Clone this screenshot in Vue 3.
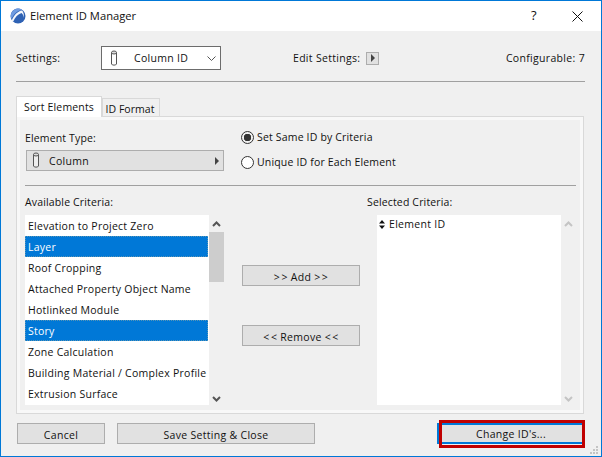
<script setup>
const available = [
  { label: 'Elevation to Project Zero' },
  { label: 'Layer', selected: true },
  { label: 'Roof Cropping' },
  { label: 'Attached Property Object Name' },
  { label: 'Hotlinked Module' },
  { label: 'Story', selected: true },
  { label: 'Zone Calculation' },
  { label: 'Building Material / Complex Profile' },
  { label: 'Extrusion Surface' },
]
</script>

<template>
  <div class="window">
    <header class="titlebar">
      <svg class="logo" width="16" height="16" viewBox="0 0 16 16">
        <circle cx="8" cy="8" r="7.5" fill="#2f62b4" />
        <path d="M1 6 C2 3 5 0.5 8 0.5 C10 0.5 11 1 12 2 C8 2.5 4 5 1.5 11 C0.8 9 0.6 8 1 6 Z" fill="#6f9be0" />
        <path d="M1.5 13 C4 7 8 3 12 2.6 C13.6 4 14 7 14 10 C13.6 8 13 6 11.5 5 C8 6 5 9 3 14 Z" fill="#f4f7fc" />
      </svg>
      <span class="title">Element ID Manager</span>
      <span class="help">?</span>
      <svg class="close" width="11" height="11" viewBox="0 0 11 11">
        <path d="M0.5 0.5 L10.5 10.5 M10.5 0.5 L0.5 10.5" stroke="#111" stroke-width="1" fill="none" />
      </svg>
    </header>

    <main class="body">
      <section class="settings">
        <span class="settings-label">Settings:</span>
        <div class="dropdown">
          <svg class="col-icon" width="8" height="17" viewBox="0 0 8 17">
            <path d="M1.5 2.5 L1.5 14 C1.5 15.5 6.5 15.5 6.5 14 L6.5 2.5" fill="#fff" stroke="#555" />
            <ellipse cx="4" cy="2.5" rx="2.5" ry="1.5" fill="#ddd" stroke="#555" />
          </svg>
          <span class="dropdown-text">Column ID</span>
          <svg width="9" height="5" viewBox="0 0 9 5">
            <path d="M0.5 0.5 L4.5 4.5 L8.5 0.5" stroke="#555" fill="none" />
          </svg>
        </div>
        <span class="edit">Edit Settings:</span>
        <span class="mini-btn"><i class="tri"></i></span>
        <span class="config">Configurable: 7</span>
      </section>

      <hr class="rule top-rule" />

      <nav class="tabs">
        <span class="tab active">Sort Elements</span>
        <span class="tab">ID Format</span>
      </nav>

      <section class="panel">
        <div class="type-row">
          <div class="type-col">
            <div class="label">Element Type:</div>
            <div class="type-btn">
              <svg class="col-icon" width="8" height="17" viewBox="0 0 8 17">
                <path d="M1.5 2.5 L1.5 14 C1.5 15.5 6.5 15.5 6.5 14 L6.5 2.5" fill="#eee" stroke="#555" />
                <ellipse cx="4" cy="2.5" rx="2.5" ry="1.5" fill="#ddd" stroke="#555" />
              </svg>
              <span class="type-text">Column</span>
              <i class="tri"></i>
            </div>
          </div>
          <div class="radios">
            <label class="radio"><span class="dot on"></span>Set Same ID by Criteria</label>
            <label class="radio"><span class="dot"></span>Unique ID for Each Element</label>
          </div>
        </div>

        <hr class="rule inner-rule" />

        <div class="criteria">
          <div class="col-left">
            <div class="label">Available Criteria:</div>
            <div class="list-wrap">
              <ul class="list">
                <li v-for="item in available" :key="item.label" :class="{ sel: item.selected }">{{ item.label }}</li>
              </ul>
              <div class="scroll">
                <svg class="arrow" width="9" height="6" viewBox="0 0 9 6"><path d="M1 5 L4.5 1.5 L8 5" stroke="#555" stroke-width="2" fill="none" /></svg>
                <div class="track"><div class="thumb"></div></div>
                <svg class="arrow" width="9" height="6" viewBox="0 0 9 6"><path d="M1 1 L4.5 4.5 L8 1" stroke="#555" stroke-width="2" fill="none" /></svg>
              </div>
            </div>
          </div>

          <div class="col-mid">
            <button class="btn">&gt;&#8202;&gt; Add &gt;&#8202;&gt;</button>
            <button class="btn">&lt;&#8202;&lt; Remove &lt;&#8202;&lt;</button>
          </div>

          <div class="col-right">
            <div class="label sel-label">Selected Criteria:</div>
            <div class="list-wrap">
              <div class="sel-list">
                <div class="sel-item">
                  <svg width="6" height="9" viewBox="0 0 6 9"><path d="M3 0 L6 3.5 L0 3.5 Z M0 5.5 L6 5.5 L3 9 Z" fill="#111" /></svg>
                  Element ID
                </div>
              </div>
              <div class="scroll right">
                <svg class="arrow" width="9" height="6" viewBox="0 0 9 6"><path d="M1 5 L4.5 1.5 L8 5" stroke="#c4c4c4" stroke-width="2" fill="none" /></svg>
                <svg class="arrow" width="9" height="6" viewBox="0 0 9 6"><path d="M1 1 L4.5 4.5 L8 1" stroke="#c4c4c4" stroke-width="2" fill="none" /></svg>
              </div>
            </div>
          </div>
        </div>
      </section>

      <footer class="footer">
        <button class="btn cancel">Cancel</button>
        <button class="btn save">Save Setting &amp; Close</button>
        <button class="btn change">Change ID's...<span class="highlight"></span></button>
      </footer>
    </main>
    <svg class="grip" width="10" height="10" viewBox="0 0 10 10">
      <path d="M7 1h2v2H7z M4 4h2v2H4z M7 4h2v2H7z M1 7h2v2H1z M4 7h2v2H4z M7 7h2v2H7z" fill="#c4c4c4" />
    </svg>
  </div>
</template>

<style scoped>
.window {
  position: relative;
  box-sizing: border-box;
  width: 602px;
  height: 457px;
  border: 1px solid #0078d7;
  background: #f0f0f0;
  font-family: "Open Sans", "Noto Sans", sans-serif;
  font-size: 10.5px;
  letter-spacing: 0.3px;
  color: #111;
  overflow: hidden;
}
.titlebar {
  display: flex;
  align-items: center;
  height: 30px;
  background: #fff;
  padding: 0 18px 0 9px;
}
.logo { margin-right: 4px; }
.title { font-size: 11.2px; letter-spacing: 0; flex: 1; margin-top: -2px; }
.help { font-size: 13px; margin-right: 35px; margin-top: -3px; }
.body { padding: 15px 16px 0 15px; }
.settings {
  display: flex;
  align-items: center;
  height: 24px;
}
.settings-label { width: 85px; }
.dropdown {
  box-sizing: border-box;
  display: flex;
  align-items: center;
  width: 120px;
  height: 24px;
  border: 1px solid #6c6c6c;
  background: #fff;
  padding: 0 4px 0 8px;
}
.dropdown-text { flex: 1; padding-left: 16px; }
.edit { margin-left: 72px; }
.mini-btn {
  box-sizing: border-box;
  display: flex;
  align-items: center;
  justify-content: center;
  width: 13px;
  height: 13px;
  margin-left: 6px;
  border: 1px solid #adadad;
  background: #e1e1e1;
}
.tri {
  display: block;
  width: 0;
  height: 0;
  border-left: 4px solid #444;
  border-top: 4px solid transparent;
  border-bottom: 4px solid transparent;
}
.config { margin-left: auto; letter-spacing: 0.32px; }
.rule { border: 0; height: 1px; background: #a0a0a0; margin: 0; }
.top-rule { margin-top: 11px; width: 569px; }
.tabs {
  display: flex;
  align-items: flex-end;
  height: 21px;
  margin-top: 14px;
  position: relative;
  z-index: 1;
}
.tab {
  box-sizing: border-box;
  height: 19px;
  width: 58px;
  border: 1px solid #d9d9d9;
  border-bottom: 0;
  text-align: center;
  line-height: 21px;
  letter-spacing: 0.05px;
  padding-right: 2px;
}
.tab.active {
  height: 21px;
  width: 86px;
  background: #fff;
  letter-spacing: 0.15px;
  padding-right: 0;
}
.panel {
  box-sizing: border-box;
  width: 568px;
  height: 298px;
  border: 1px solid #d9d9d9;
  box-shadow: inset 0 0 0 3px #f8f8f8;
  background: #f0f0f0;
  padding: 13px 7px 0 8px;
  margin-top: -1px;
}
.type-row { display: flex; height: 42px; }
.type-col { width: 216px; }
.label { height: 17px; line-height: 17px; letter-spacing: 0.15px; }
.type-btn {
  box-sizing: border-box;
  display: flex;
  align-items: center;
  width: 198px;
  height: 21px;
  margin-top: 3px;
  margin-left: 1px;
  padding: 0 4px 0 5px;
  border: 1px solid #adadad;
  background: #e1e1e1;
}
.type-text { flex: 1; padding-left: 9px; line-height: 19px; padding-top: 2px; }
.radios {
  display: flex;
  flex-direction: column;
  gap: 11px;
  letter-spacing: 0.17px;
}
.radio { display: flex; align-items: center; height: 14px; }
.dot {
  box-sizing: border-box;
  width: 13px;
  height: 13px;
  margin-right: 3px;
  border: 1px solid #333;
  border-radius: 50%;
  background: #fff;
}
.dot.on {
  background: radial-gradient(circle, #333 0 3.5px, #f0f0f0 4px);
}
.inner-rule { margin-top: 13px; }
.criteria { display: flex; margin-top: 8px; }
.col-left { width: 217px; }
.list-wrap { display: flex; margin-top: 4px; height: 190px; }
.list {
  list-style: none;
  margin: 0;
  padding: 0;
  width: 184px;
  background: #fff;
  white-space: nowrap;
  overflow: hidden;
  letter-spacing: 0.25px;
}
.list li {
  box-sizing: border-box;
  width: 183px;
  height: 21px;
  line-height: 23px;
  padding-left: 3px;
}
.list li.sel {
  background: #0078d7;
  color: #fff;
  outline: 1px dotted rgba(255, 205, 120, 0.35);
  outline-offset: -1px;
}
.scroll {
  width: 15px;
  display: flex;
  flex-direction: column;
  justify-content: space-between;
  align-items: center;
  padding: 6px 0 3px;
  box-sizing: border-box;
  position: relative;
}
.track { flex: 1; width: 15px; position: relative; }
.thumb {
  width: 15px;
  height: 50px;
  margin-top: 5px;
  background: #cdcdcd;
}
.col-mid {
  width: 118px;
  display: flex;
  flex-direction: column;
  gap: 39px;
  padding-top: 71px;
}
.btn {
  box-sizing: border-box;
  font: inherit;
  letter-spacing: inherit;
  color: inherit;
  height: 21px;
  border: 1px solid #adadad;
  background: #e1e1e1;
  padding: 2px 0 0;
}
.col-right { margin-left: 7px; }
.col-right .list-wrap { margin-left: 10px; }
.sel-list { width: 184px; background: #fff; }
.sel-item { height: 19px; line-height: 19px; padding-left: 2px; display: flex; align-items: center; gap: 4px; }
.scroll.right { width: 15px; }
.footer {
  display: flex;
  align-items: center;
  margin-top: 9px;
  height: 21px;
  padding-left: 1px;
}
.cancel { width: 88px; }
.save { width: 198px; margin-left: 12px; }
.change {
  position: relative;
  width: 146px;
  margin-left: 122px;
  border: 0;
  border-top: 2px solid #0078d7;
  border-bottom: 2px solid #0078d7;
  border-left: 2px solid #0078d7;
  padding: 0;
}
.highlight {
  position: absolute;
  left: 0;
  top: -5px;
  width: 146px;
  height: 28px;
  box-sizing: border-box;
  border: 3px solid #c00000;
}
.grip { position: absolute; right: 2px; bottom: 1px; }
</style>
